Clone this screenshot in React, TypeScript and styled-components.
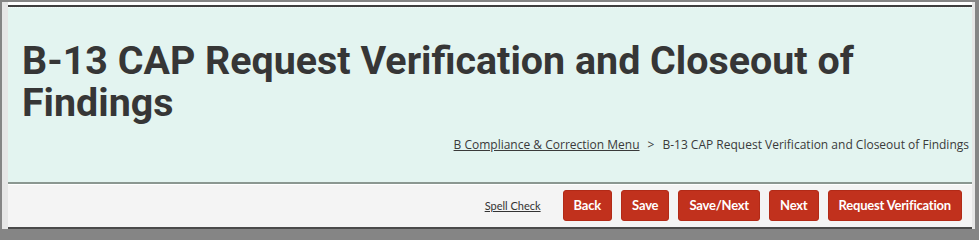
import React from 'react';
import styled, { createGlobalStyle } from 'styled-components';

const GlobalStyle = createGlobalStyle`
  html, body {
    margin: 0;
    padding: 0;
    background: #858585;
  }
  body {
    font-family: 'Open Sans', 'Noto Sans', sans-serif;
  }
`;

const Frame = styled.div`
  width: 979px;
  height: 234px;
  box-sizing: border-box;
  padding: 2px 4px 5px 2px;
  background: #858585;
`;

const Window = styled.div`
  height: 100%;
  box-sizing: border-box;
  padding: 0 3px 0 6px;
  background: #e6e6e6;
`;

const Page = styled.div`
  height: 100%;
  display: flex;
  flex-direction: column;
  background: #fff;
  padding-top: 3px;
  box-sizing: border-box;
`;

const Header = styled.header`
  position: relative;
  height: 177px;
  box-sizing: content-box;
  border-top: 2px solid #3f3f3f;
  border-bottom: 2px solid #8b9791;
  background: #e3f4f0;
  padding: 0 3px 0 14px;
  display: flex;
  flex-direction: column;

  &::before {
    content: '';
    position: absolute;
    left: 0;
    right: 0;
    top: 0;
    border-top: 1px dotted #f6fbfa;
  }
`;

const Title = styled.h1`
  margin: 33px 0 0;
  font-family: Roboto, 'Liberation Sans', sans-serif;
  font-weight: 700;
  font-size: 39.4px;
  line-height: 42px;
  color: #363636;
`;

const Breadcrumb = styled.nav`
  margin-top: 12px;
  align-self: flex-end;
  display: flex;
  align-items: center;
  gap: 8px;
  font-size: 12px;
  line-height: 18px;
  color: #3a3a3a;
`;

const CrumbLink = styled.a`
  color: #3a3a3a;
  text-decoration: underline;
`;

const Footer = styled.footer`
  margin-top: 1px;
  height: 40px;
  background: #f4f4f4;
  border-bottom: 2px solid #4a4a4a;
  display: flex;
  align-items: center;
  justify-content: flex-end;
  gap: 9px;
  padding: 0 10px 2px 0;
`;

const SpellCheck = styled.a`
  margin-right: 13px;
  font-family: Lato, 'Open Sans', sans-serif;
  font-size: 11px;
  color: #333;
  text-decoration: underline;
`;

const Button = styled.button`
  height: 31px;
  padding: 0 10px;
  border: 1px solid #b22a17;
  border-radius: 3px;
  background: #c1311d;
  color: #fff;
  font-family: Lato, 'Open Sans', sans-serif;
  font-size: 13px;
  font-weight: 700;
  letter-spacing: -0.2px;
  cursor: pointer;
`;

export default function App() {
  return (
    <>
      <GlobalStyle />
      <Frame>
        <Window>
          <Page>
            <Header>
              <Title>B-13 CAP Request Verification and Closeout of Findings</Title>
              <Breadcrumb>
                <CrumbLink href="#">B Compliance &amp; Correction Menu</CrumbLink>
                <span>&gt;</span>
                <span>B-13 CAP Request Verification and Closeout of Findings</span>
              </Breadcrumb>
            </Header>
            <Footer>
              <SpellCheck href="#">Spell Check</SpellCheck>
              <Button>Back</Button>
              <Button>Save</Button>
              <Button>Save/Next</Button>
              <Button>Next</Button>
              <Button>Request Verification</Button>
            </Footer>
          </Page>
        </Window>
      </Frame>
    </>
  );
}
